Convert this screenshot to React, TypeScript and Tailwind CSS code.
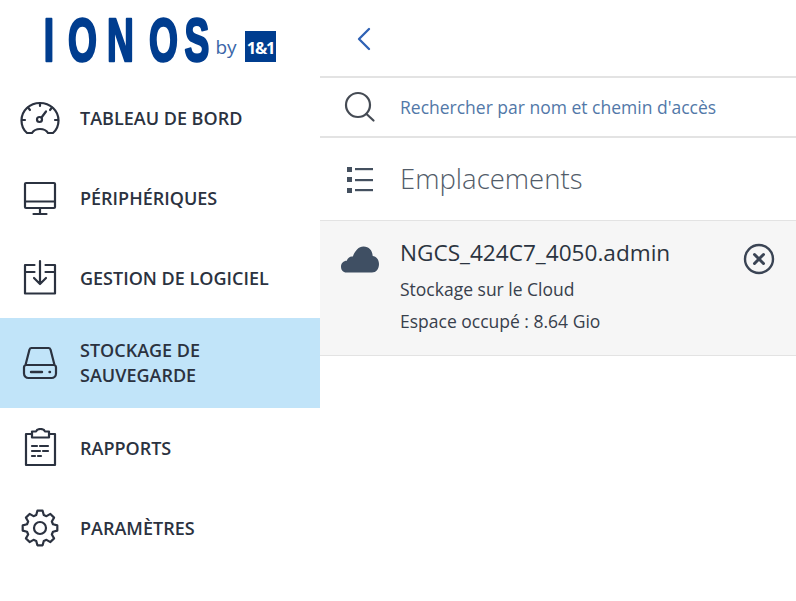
import React from 'react';
import { ChevronLeft } from 'lucide-react';

const Logo = () => (
  <svg viewBox="0 0 320 78" className="block w-[320px] h-[78px]">
    <text
      transform="scale(0.6 1)"
      x="73 113.300 178.300 248.300 307.700"
      y="61"
      fill="#003d8f"
      stroke="#003d8f"
      strokeWidth="2.200"
      strokeLinejoin="round"
      vectorEffect="non-scaling-stroke"
      fontFamily="'Liberation Sans', sans-serif"
      fontWeight="700"
      fontSize="62"
    >
      IONOS
    </text>
    <text x="215.500" y="54" fill="#3a66a8" fontFamily="'Open Sans', sans-serif" fontSize="19">by</text>
    <rect x="245" y="31" width="31" height="31" fill="#003d8f" />
    <text x="260.500" y="54" fill="#fff" textAnchor="middle" fontFamily="'Open Sans', sans-serif" fontWeight="700" fontSize="16.500" letterSpacing="-1.200">1&amp;1</text>
  </svg>
);

const iconProps = {
  viewBox: '0 0 40 40',
  fill: 'none',
  stroke: '#2b3240',
  strokeWidth: 2.2,
  strokeLinecap: 'round' as const,
  strokeLinejoin: 'round' as const,
  className: 'w-10 h-10 shrink-0',
};

const GaugeIcon = () => (
  <svg {...iconProps}>
    <path d="M7 35c-3.500-3-5.500-7.500-5.500-12.500C1.500 12.500 9.800 5 20 5s18.500 7.500 18.500 17.500c0 5-2 9.500-5.500 12.500h-5c-1.500-2.500-4.500-4-8-4s-6.500 1.500-8 4z" />
    <circle cx="19.500" cy="21.500" r="2.500" />
    <path d="M21.500 19.500l4.500-6M20 5v3M8 9.500l2 2.500M32 9.500l-2 2.500M2 22h3M38 22h-3" />
  </svg>
);

const MonitorIcon = () => (
  <svg {...iconProps}>
    <rect x="5" y="5" width="30" height="25" rx="1" />
    <path d="M5 23.500h30M20 30v6M13.500 36h13" />
  </svg>
);

const SoftwareIcon = () => (
  <svg {...iconProps}>
    <path d="M14.500 7H5v28.500h30V7h-9.500M5 14h9.500M35 14h-9.500M20 3v22M14 20l6 6 6-6" />
  </svg>
);

const DriveIcon = () => (
  <svg {...iconProps}>
    <path d="M11.500 5h17c1 0 1.700.6 2 1.500l4 15.500H5.500l4-15.500c.3-.9 1-1.500 2-1.500zM6.500 22h27c1.400 0 2.500 1.100 2.500 2.500v6c0 2.500-2 4.500-4.500 4.500h-23C6 35 4 33 4 30.500v-6C4 23.100 5.100 22 6.500 22z" />
    <path d="M11 29h11" strokeWidth="2.400" />
    <path d="M29.500 29h.5" strokeWidth="2.400" />
  </svg>
);

const ReportIcon = () => (
  <svg {...iconProps}>
    <path d="M12 5.500H6v31h29v-31h-6M12 3h4c.6-1.800 2.200-2.500 4.500-2.500S24.400 1.200 25 3h4v6H12z" transform="translate(0 0.500)" />
    <path d="M12 18h5M20 18h8M12 23h8M23 23h5M12 28h3M18 28h3" />
  </svg>
);

const GEAR_PATH = (() => {
  const pts: string[] = [];
  const teeth = 8;
  for (let i = 0; i < teeth; i++) {
    const a = (i / teeth) * Math.PI * 2 - Math.PI / 2;
    const step = Math.PI / teeth;
    const list: [number, number][] = [
      [13.500, a - step * 0.72],
      [17.500, a - step * 0.38],
      [17.500, a + step * 0.38],
      [13.500, a + step * 0.72],
    ];
    for (const [r, t] of list) {
      pts.push(`${(20 + r * Math.cos(t)).toFixed(2)} ${(20 + r * Math.sin(t)).toFixed(2)}`);
    }
  }
  return `M${pts.join('L')}Z`;
})();

const GearIcon = () => (
  <svg {...iconProps}>
    <path d={GEAR_PATH} />
    <circle cx="20" cy="20" r="6" />
  </svg>
);

const navItems = [
  { label: 'TABLEAU DE BORD', icon: <GaugeIcon />, h: 'h-20' },
  { label: 'PÉRIPHÉRIQUES', icon: <MonitorIcon />, h: 'h-20' },
  { label: 'GESTION DE LOGICIEL', icon: <SoftwareIcon />, h: 'h-20' },
  { label: 'STOCKAGE DE SAUVEGARDE', icon: <DriveIcon />, h: 'h-[90px]', active: true },
  { label: 'RAPPORTS', icon: <ReportIcon />, h: 'h-20' },
  { label: 'PARAMÈTRES', icon: <GearIcon />, h: 'h-20' },
];

export default function App() {
  return (
    <div className="flex w-[796px] h-[601px] overflow-hidden bg-white font-['Open_Sans',sans-serif]">
      <aside className="w-[320px] shrink-0">
        <Logo />
        <nav>
          {navItems.map((item) => (
            <div key={item.label} className={`flex items-center gap-5 pl-5 pr-10 ${item.h} ${item.active ? 'bg-[#c1e4f9]' : ''}`}>
              {item.icon}
              <span className={`text-[18px] leading-[25px] font-semibold text-[#2b3240] ${item.active ? 'mb-[1px]' : ''}`}>{item.label}</span>
            </div>
          ))}
        </nav>
      </aside>

      <main className="flex-1 min-w-0">
        <div className="flex items-center h-[78px] pl-6 border-b-2 border-[#e3e3e3]">
          <ChevronLeft className="w-10 h-10 mt-[2px] text-[#2f62b5]" strokeWidth={1.400} />
        </div>
        <div className="flex items-center gap-5 h-[60px] pl-5 border-b-2 border-[#e3e3e3]">
          <svg viewBox="0 0 40 40" fill="none" stroke="#454b54" strokeWidth="2.200" strokeLinecap="round" className="w-10 h-10 shrink-0">
            <circle cx="18" cy="18" r="12" />
            <path d="M26.500 27l7 6.500" />
          </svg>
          <span className="text-[17.5px] text-[#5278a8]">Rechercher par nom et chemin d'accès</span>
        </div>
        <div className="flex items-center gap-5 h-[82px] pl-5">
          <svg viewBox="0 0 40 40" className="w-10 h-10 shrink-0" fill="#44505f">
            <rect x="7" y="8" width="5" height="5" />
            <rect x="7" y="18" width="5" height="5" />
            <rect x="7" y="29" width="5" height="5" />
            <rect x="15" y="9" width="18" height="2.200" />
            <rect x="15" y="20" width="18" height="2.200" />
            <rect x="15" y="30" width="18" height="2.200" />
          </svg>
          <span className="mb-[1px] text-[27.5px] font-light text-[#525c69]">Emplacements</span>
        </div>
        <div className="flex items-start gap-5 h-[136px] pl-5 pr-[21px] pt-[14px] bg-[#f6f6f6] border-y border-[#e3e3e3]">
          <svg viewBox="0 0 40 40" className="w-10 h-10 mt-[3px] shrink-0" fill="#3f4f63">
            <path d="M6.500 34.500C3 34.500 1 32 1 28.500c0-3.200 2.500-5.800 5.800-5.800.8-3 3.500-4.700 6-4.200C15 13 18.500 8.500 23.500 8.500c5.500 0 9 4 9.200 9.500 3.500.5 6.300 3.500 6.300 8 0 5-3 8.500-7 8.500z" />
          </svg>
          <div className="flex-1 min-w-0">
            <div className="text-[22.6px] leading-[36px] text-[#2b3440]">NGCS_424C7_4050.admin</div>
            <div className="text-[17.5px] leading-[32px] mt-[2px] text-[#38404c]">Stockage sur le Cloud</div>
            <div className="text-[17.5px] leading-[32px] text-[#38404c]">Espace occupé : 8.64 Gio</div>
          </div>
          <svg viewBox="0 0 32 32" fill="none" stroke="#3a4454" strokeWidth="2.400" strokeLinecap="round" className="w-8 h-8 mt-[8px] shrink-0">
            <circle cx="16" cy="16" r="14" />
            <path d="M11.500 11.500l9 9M20.500 11.500l-9 9" strokeWidth="3" />
          </svg>
        </div>
      </main>
    </div>
  );
}
